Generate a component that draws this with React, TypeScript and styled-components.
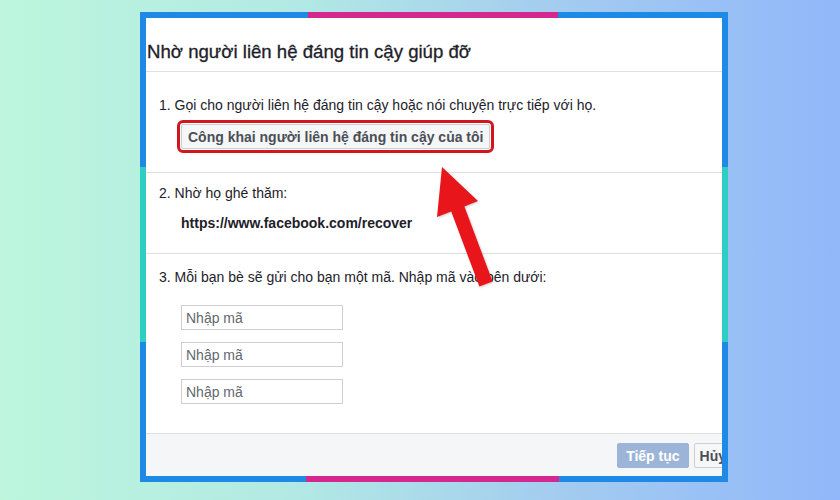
import React from 'react'
import styled, { createGlobalStyle } from 'styled-components'

const GlobalStyle = createGlobalStyle`
  html, body {
    margin: 0;
    padding: 0;
  }
  body {
    font-family: 'Liberation Sans', Helvetica, Arial, sans-serif;
    color: #1d2129;
  }
`

const Page = styled.div`
  width: 840px;
  height: 500px;
  box-sizing: border-box;
  padding: 12px 0 0 140px;
  background: linear-gradient(90deg, #bdf6dd 0%, #b2e9e4 35%, #a4cdef 65%, #92b7fa 100%);
  overflow: hidden;
`

const Frame = styled.div`
  position: relative;
  width: 588px;
  height: 470px;
  box-sizing: border-box;
  padding: 6px;
  background:
    linear-gradient(#d4288f, #d4288f) 168px 0 / 250px 6px no-repeat,
    linear-gradient(#d4288f, #d4288f) 166px 100% / 253px 6px no-repeat,
    linear-gradient(#2dcfc3, #2dcfc3) 0 155px / 6px 175px no-repeat,
    linear-gradient(#2dcfc3, #2dcfc3) 100% 155px / 6px 175px no-repeat,
    #1f89e6;
`

const Viewport = styled.div`
  width: 100%;
  height: 100%;
  background: #fff;
  overflow: hidden;
`

const Dialog = styled.div`
  width: 600px;
  height: 100%;
  display: flex;
  flex-direction: column;
`

const Header = styled.div`
  height: 54px;
  box-sizing: border-box;
  display: flex;
  align-items: flex-end;
  padding: 0 0 8px 1px;
  border-bottom: 1px solid #dddfe2;
  font-size: 18.6px;
  line-height: 22px;
  color: #1d2129;
  -webkit-text-stroke: 0.3px #1d2129;
`

const Section = styled.div<{ $top: number; $bottom?: number; $grow?: boolean }>`
  padding: ${p => p.$top}px 0 ${p => p.$bottom ?? 0}px 13px;
  border-bottom: ${p => (p.$grow ? 'none' : '1px solid #dddfe2')};
  flex: ${p => (p.$grow ? 1 : 'none')};
`

const StepText = styled.div`
  font-size: 14px;
  line-height: 18px;
  color: #1d2129;
`

const Indent = styled.div<{ $gap: number }>`
  margin: ${p => p.$gap}px 0 0 22px;
`

const ContactButton = styled.button`
  height: 25px;
  padding: 0 6px;
  box-sizing: border-box;
  background: #f5f6f7;
  border: 1px solid #ccd0d5;
  border-radius: 2px;
  font-family: inherit;
  font-size: 14px;
  font-weight: bold;
  color: #4b4f56;
  outline: 3px solid #d3161d;
  outline-offset: 1px;
`

const Url = styled.div`
  font-size: 14px;
  line-height: 18px;
  font-weight: bold;
  color: #1d2129;
`

const CodeList = styled.div`
  display: flex;
  flex-direction: column;
  gap: 12px;
`

const CodeInput = styled.input`
  width: 162px;
  height: 25px;
  box-sizing: border-box;
  padding: 0 4px;
  border: 1px solid #ccd0d5;
  font-family: inherit;
  font-size: 14px;
  color: #1d2129;
  &::placeholder {
    color: #63676e;
  }
`

const Footer = styled.div`
  height: 43px;
  box-sizing: border-box;
  display: flex;
  justify-content: flex-end;
  align-items: flex-start;
  gap: 5px;
  padding: 9px 14px 0 0;
  border-top: 1px solid #dddfe2;
  background: #f5f6f7;
`

const FooterButton = styled.button<{ $primary?: boolean }>`
  height: 25px;
  padding: 0 ${p => (p.$primary ? 8 : 5)}px;
  box-sizing: border-box;
  border-radius: 2px;
  border: 1px solid ${p => (p.$primary ? '#9cb4d8' : '#ccd0d5')};
  background: ${p => (p.$primary ? '#9cb4d8' : '#f6f7f9')};
  color: ${p => (p.$primary ? '#fff' : '#4b4f56')};
  font-family: inherit;
  font-size: 14px;
  font-weight: bold;
`

const Arrow = styled.svg`
  position: absolute;
  left: 0;
  top: 0;
  pointer-events: none;
  filter: drop-shadow(1px 1px 1px rgba(0, 0, 0, 0.2));
`

export default function App() {
  return (
    <>
      <GlobalStyle />
      <Page>
        <Frame>
          <Viewport>
            <Dialog>
              <Header>Nhờ người liên hệ đáng tin cậy giúp đỡ</Header>
              <Section $top={24} $bottom={23}>
                <StepText>1. Gọi cho người liên hệ đáng tin cậy hoặc nói chuyện trực tiếp với họ.</StepText>
                <Indent $gap={10}>
                  <ContactButton>Công khai người liên hệ đáng tin cậy của tôi</ContactButton>
                </Indent>
              </Section>
              <Section $top={11} $bottom={21}>
                <StepText>2. Nhờ họ ghé thăm:</StepText>
                <Indent $gap={12}>
                  <Url>https://www.facebook.com/recover</Url>
                </Indent>
              </Section>
              <Section $top={14} $grow>
                <StepText>3. Mỗi bạn bè sẽ gửi cho bạn một mã. Nhập mã vào bên dưới:</StepText>
                <Indent $gap={19}>
                  <CodeList>
                    <CodeInput placeholder="Nhập mã" />
                    <CodeInput placeholder="Nhập mã" />
                    <CodeInput placeholder="Nhập mã" />
                  </CodeList>
                </Indent>
              </Section>
              <Footer>
                <FooterButton $primary>Tiếp tục</FooterButton>
                <FooterButton>Hủy</FooterButton>
              </Footer>
            </Dialog>
          </Viewport>
          <Arrow width="588" height="470" viewBox="0 0 588 470">
            <polygon
              points="302,155 338,189 324.4,194.6 352.6,269.5 339.4,274.5 311.2,199.6 297,205"
              fill="#e8161b"
            />
          </Arrow>
        </Frame>
      </Page>
    </>
  )
}
